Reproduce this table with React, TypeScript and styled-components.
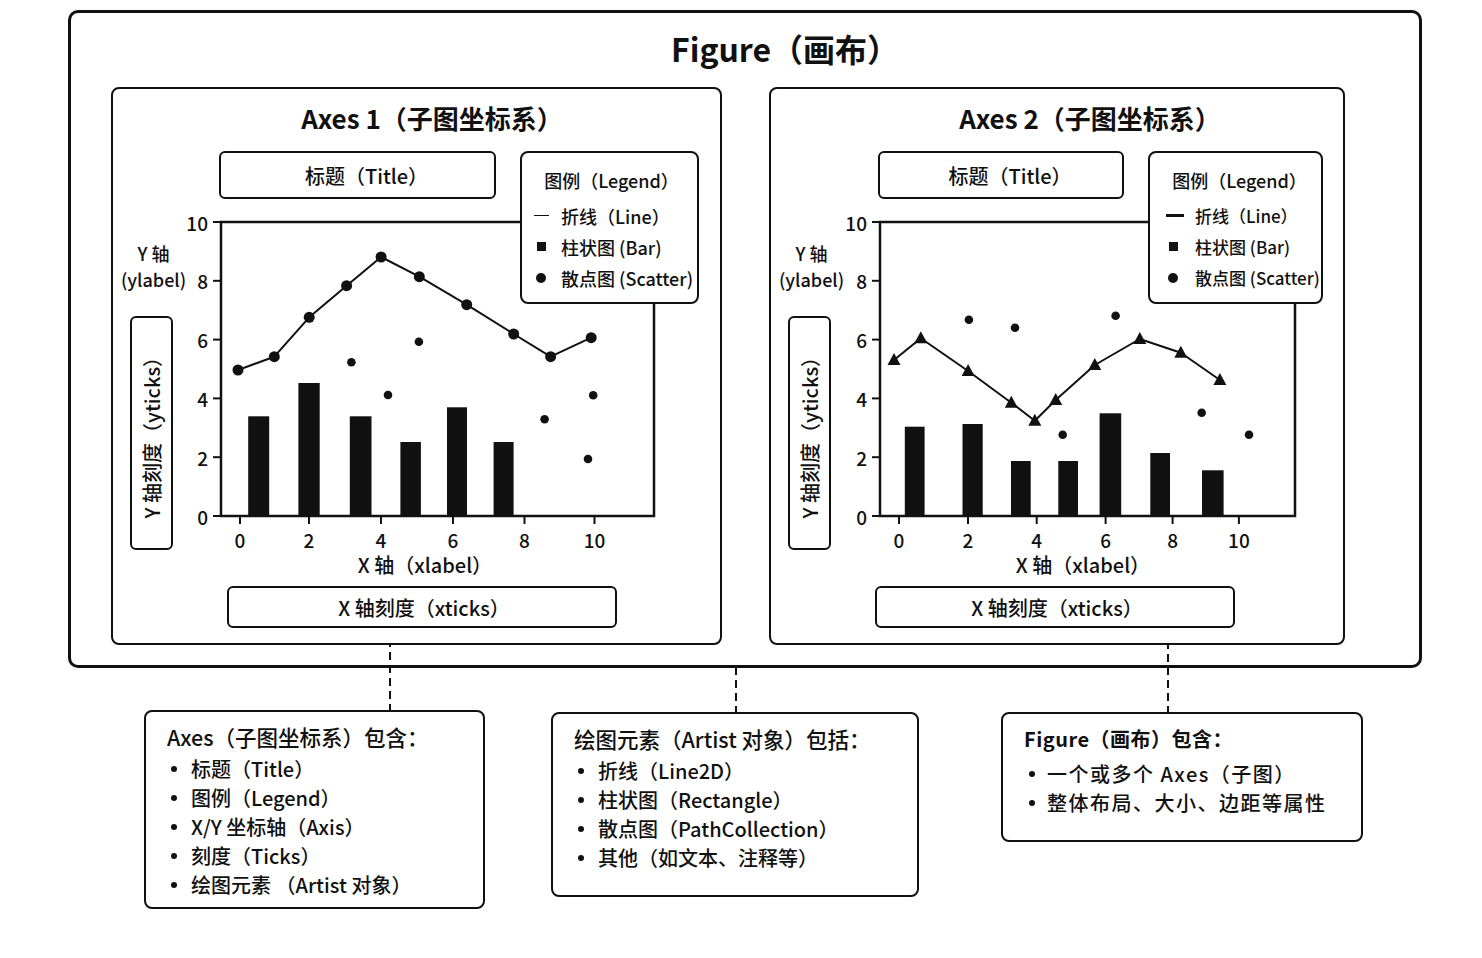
import React from 'react';
import styled, { createGlobalStyle } from 'styled-components';

const INK = '#111';
const FONT = `"Noto Sans CJK SC", "Noto Sans", sans-serif`;

const GlobalStyle = createGlobalStyle`
  html, body {
    margin: 0;
    background: #fff;
    color: ${INK};
    font-family: ${FONT};
    font-weight: 500;
  }
`;

type Pt = [number, number];

type ChartSpec = {
  left: number;
  right: number;
  top: number;
  bottom: number;
  xTicks: number[];
  line: Pt[];
  marker: 'circle' | 'triangle';
  scatter: Pt[];
  bars: { x: number; w: number; top: number }[];
};

type AxesSpec = {
  name: string;
  width: number;
  titleBox: { left: number; width: number };
  xTicksBox: { left: number; width: number };
  legend: { left: number; width: number; inset: number; cell: number; size: number; thickLine: boolean };
  chart: ChartSpec;
};

const axesList: AxesSpec[] = [
  {
    name: 'Axes 1（子图坐标系）',
    width: 611,
    titleBox: { left: 29, width: 277 },
    xTicksBox: { left: 37, width: 390 },
    legend: { left: 407, width: 179, inset: 12, cell: 27, size: 18, thickLine: false },
    chart: {
      left: 31,
      right: 464,
      top: 10,
      bottom: 304,
      xTicks: [50, 119, 191, 263, 334.5, 404.5],
      marker: 'circle',
      line: [
        [48, 158], [84.3, 144.7], [119.2, 105.3], [156.6, 73.7], [191.1, 45],
        [229.3, 64.7], [276.7, 92.7], [323.7, 122], [360.6, 144.7], [401.2, 125.7],
      ],
      scatter: [
        [161.4, 150.3], [228.9, 129.7], [198, 183], [354.6, 207.3], [403.2, 183.3], [398, 247],
      ],
      bars: [
        { x: 58.2, w: 21, top: 204.3 },
        { x: 108.4, w: 21.3, top: 171 },
        { x: 159.8, w: 21.7, top: 204.3 },
        { x: 210.4, w: 20.5, top: 230 },
        { x: 257, w: 20, top: 195.3 },
        { x: 303.6, w: 20, top: 230 },
      ],
    },
  },
  {
    name: 'Axes 2（子图坐标系）',
    width: 576,
    titleBox: { left: 30, width: 246 },
    xTicksBox: { left: 27, width: 360 },
    legend: { left: 377, width: 175, inset: 16, cell: 29, size: 17, thickLine: true },
    chart: {
      left: 32,
      right: 447,
      top: 10,
      bottom: 304,
      xTicks: [51, 120, 188.7, 257.6, 324.6, 390.9],
      marker: 'triangle',
      line: [
        [46, 148], [72.8, 126.3], [120.1, 159], [163.3, 190.7], [186.8, 208.7],
        [207.7, 188], [246.8, 153], [291.8, 127], [332.8, 140.7], [371.9, 168],
      ],
      scatter: [
        [120.9, 107.7], [167, 115.7], [267.6, 103.7], [214.7, 222.7], [353.7, 200.7], [401, 222.7],
      ],
      bars: [
        { x: 56.8, w: 19.8, top: 214.7 },
        { x: 114.5, w: 20.2, top: 212 },
        { x: 163, w: 19.7, top: 249 },
        { x: 210.3, w: 19.7, top: 249 },
        { x: 251.6, w: 21.6, top: 201.3 },
        { x: 302.3, w: 19.7, top: 241 },
        { x: 354, w: 21.6, top: 258.3 },
      ],
    },
  },
];

const callouts = [
  {
    title: 'Axes（子图坐标系）包含：',
    items: ['标题（Title）', '图例（Legend）', 'X/Y 坐标轴（Axis）', '刻度（Ticks）', '绘图元素 （Artist 对象）'],
    left: 76, top: 42, width: 341, height: 199, wire: { x: 243, height: 67 }, large: false,
  },
  {
    title: '绘图元素（Artist 对象）包括：',
    items: ['折线（Line2D）', '柱状图（Rectangle）', '散点图（PathCollection）', '其他（如文本、注释等）'],
    left: 66, top: 44, width: 368, height: 185, wire: { x: 182, height: 46 }, large: false,
  },
  {
    title: 'Figure（画布）包含：',
    items: ['一个或多个 Axes（子图）', '整体布局、大小、边距等属性'],
    left: 82, top: 44, width: 362, height: 130, wire: { x: 164, height: 69 }, large: true,
  },
];

/* ---------- page + figure ---------- */

const Page = styled.div`
  width: 1482px;
  height: 958px;
  box-sizing: border-box;
  padding: 10px 0 0 68px;
  overflow: hidden;
`;

const FigureFrame = styled.section`
  width: 1354px;
  height: 658px;
  box-sizing: border-box;
  border: 3px solid ${INK};
  border-radius: 10px;
  padding: 16px 0 0 40px;
  display: flex;
  flex-direction: column;
`;

const FigureTitle = styled.h1`
  margin: 0;
  padding-left: 40px;
  text-align: center;
  font-size: 32px;
  line-height: 38px;
  font-weight: 700;
`;

const AxesRow = styled.div`
  margin-top: 20px;
  display: flex;
  gap: 47px;
  align-items: flex-start;
`;

/* ---------- axes panel ---------- */

const AxesPanel = styled.div<{ $width: number }>`
  position: relative;
  width: ${({ $width }) => $width}px;
  height: 558px;
  box-sizing: border-box;
  border: 2px solid ${INK};
  border-radius: 8px;
  padding-top: 14px;
`;

const AxesHeading = styled.h2`
  margin: 0 0 0 84px;
  width: 470px;
  text-align: center;
  font-size: 26px;
  line-height: 30px;
  font-weight: 600;
`;

const AxesBody = styled.div`
  display: flex;
`;

const LeftColumn = styled.div`
  width: 77px;
  display: flex;
  flex-direction: column;
  align-items: center;
`;

const YLabel = styled.div`
  margin-top: 107px;
  padding-left: 4px;
  font-size: 18px;
  line-height: 26px;
  text-align: center;
  white-space: nowrap;
`;

const RoundBox = styled.div`
  box-sizing: border-box;
  border: 2px solid ${INK};
  border-radius: 6px;
  display: flex;
  align-items: center;
  justify-content: center;
  background: #fff;
  white-space: nowrap;
`;

const YTicksBox = styled(RoundBox)`
  margin-top: 24px;
  width: 43px;
  height: 234px;
`;

const SidewaysText = styled.span`
  writing-mode: vertical-rl;
  text-orientation: sideways;
  transform: rotate(180deg);
  font-size: 20px;
  line-height: 24px;
`;

const MainColumn = styled.div`
  width: 470px;
  display: flex;
  flex-direction: column;
`;

const TitleBox = styled(RoundBox)<{ $left: number; $width: number }>`
  margin: 18px 0 0 ${({ $left }) => $left}px;
  padding-left: 18px;
  width: ${({ $width }) => $width}px;
  height: 48px;
  font-size: 20px;
`;

const PlotSvg = styled.svg`
  display: block;
  margin-top: 13px;
  overflow: visible;
  font-family: ${FONT};
`;

const XLabel = styled.div`
  text-align: center;
  font-size: 20px;
  line-height: 26px;
`;

const XTicksBox = styled(RoundBox)<{ $left: number; $width: number }>`
  margin: 8px 0 0 ${({ $left }) => $left}px;
  padding-left: 4px;
  width: ${({ $width }) => $width}px;
  height: 42px;
  font-size: 20px;
`;

/* ---------- legend ---------- */

const LegendBox = styled.div<{ $left: number; $width: number; $inset: number; $size: number }>`
  position: absolute;
  left: ${({ $left }) => $left}px;
  top: 62px;
  width: ${({ $width }) => $width}px;
  height: 153px;
  box-sizing: border-box;
  border: 2px solid ${INK};
  border-radius: 8px;
  background: #fff;
  padding: 14px 0 0 ${({ $inset }) => $inset}px;
  font-size: ${({ $size }) => $size}px;
`;

const LegendTitle = styled.div`
  margin-bottom: 7px;
  font-size: 18px;
  line-height: 26px;
  text-align: center;
  padding-right: 8px;
  white-space: nowrap;
`;

const LegendItem = styled.div`
  display: flex;
  align-items: center;
  height: 31px;
  white-space: nowrap;
`;

const LegendCell = styled.span<{ $w: number }>`
  flex: none;
  width: ${({ $w }) => $w}px;
  display: flex;
  align-items: center;
`;

const LineSwatch = styled.span<{ $thick: boolean }>`
  width: ${({ $thick }) => ($thick ? 18 : 15)}px;
  height: ${({ $thick }) => ($thick ? 3 : 1.5)}px;
  background: ${INK};
`;

const SquareSwatch = styled.span`
  margin-left: 3px;
  width: 9px;
  height: 9px;
  background: ${INK};
`;

const DotSwatch = styled.span`
  margin-left: 2px;
  width: 10px;
  height: 10px;
  border-radius: 50%;
  background: ${INK};
`;

/* ---------- callouts ---------- */

const CalloutRow = styled.div`
  display: flex;
  align-items: flex-start;
`;

const Callout = styled.div<{ $left: number; $top: number; $width: number; $height: number }>`
  position: relative;
  margin: ${({ $top }) => $top}px 0 0 ${({ $left }) => $left}px;
  width: ${({ $width }) => $width}px;
  height: ${({ $height }) => $height}px;
  box-sizing: border-box;
  border: 2px solid ${INK};
  border-radius: 8px;
  padding: 11px 0 0 21px;
`;

const Wire = styled.span<{ $x: number; $h: number }>`
  position: absolute;
  left: ${({ $x }) => $x}px;
  bottom: 100%;
  width: 2px;
  height: ${({ $h }) => $h}px;
  background: repeating-linear-gradient(to top, ${INK} 0 8px, transparent 8px 13px);
`;

const CalloutTitle = styled.div<{ $large: boolean }>`
  font-size: ${({ $large }) => ($large ? 20 : 21.5)}px;
  line-height: 28px;
  font-weight: ${({ $large }) => ($large ? 600 : 500)};
  letter-spacing: ${({ $large }) => ($large ? 0.5 : 0)}px;
  white-space: nowrap;
`;

const BulletList = styled.ul<{ $large: boolean }>`
  margin: ${({ $large }) => ($large ? 6 : 3)}px 0 0;
  padding: 0;
  list-style: none;
`;

const BulletItem = styled.li<{ $large: boolean }>`
  display: flex;
  align-items: center;
  height: 29px;
  font-size: 20px;
  letter-spacing: ${({ $large }) => ($large ? 1.5 : 0)}px;
  white-space: nowrap;

  &::before {
    content: '';
    width: 6px;
    height: 6px;
    border-radius: 50%;
    background: ${INK};
    margin: 0 ${({ $large }) => ($large ? 12 : 14)}px 0 ${({ $large }) => ($large ? 5 : 4)}px;
    flex: none;
  }
`;

/* ---------- chart ---------- */

const Chart = ({ spec }: { spec: ChartSpec }) => {
  const { left, right, top, bottom } = spec;
  const yTicks = [0, 2, 4, 6, 8, 10].map((v) => ({ v, y: bottom - (v / 10) * (bottom - top) }));
  const linePts = spec.line.map(([x, y]) => `${x},${y}`).join(' ');

  return (
    <PlotSvg width={470} height={340} viewBox="0 0 470 340">
      <rect x={left} y={top} width={right - left} height={bottom - top} fill="none" stroke={INK} strokeWidth={2.5} />
      {yTicks.map(({ v, y }) => (
        <g key={v}>
          <line x1={left - 8} x2={left} y1={y} y2={y} stroke={INK} strokeWidth={2} />
          <text x={left - 13} y={y} textAnchor="end" dominantBaseline="central" fontSize={19} fill={INK}>
            {v}
          </text>
        </g>
      ))}
      {spec.xTicks.map((x, i) => (
        <g key={i}>
          <line x1={x} x2={x} y1={bottom} y2={bottom + 8} stroke={INK} strokeWidth={2} />
          <text x={x} y={bottom + 23} textAnchor="middle" dominantBaseline="central" fontSize={19} fill={INK}>
            {i * 2}
          </text>
        </g>
      ))}
      {spec.bars.map((b, i) => (
        <rect key={i} x={b.x} y={b.top} width={b.w} height={bottom - b.top} fill={INK} />
      ))}
      <polyline points={linePts} fill="none" stroke={INK} strokeWidth={2} strokeLinejoin="round" />
      {spec.line.map(([x, y], i) =>
        spec.marker === 'circle' ? (
          <circle key={i} cx={x} cy={y} r={5.5} fill={INK} />
        ) : (
          <path key={i} d={`M${x} ${y - 7}L${x + 6.5} ${y + 5}L${x - 6.5} ${y + 5}Z`} fill={INK} />
        ),
      )}
      {spec.scatter.map(([x, y], i) => (
        <circle key={i} cx={x} cy={y} r={4.3} fill={INK} />
      ))}
    </PlotSvg>
  );
};

const Axes = ({ spec }: { spec: AxesSpec }) => (
  <AxesPanel $width={spec.width}>
    <AxesHeading>{spec.name}</AxesHeading>
    <AxesBody>
      <LeftColumn>
        <YLabel>
          Y 轴
          <br />
          (ylabel)
        </YLabel>
        <YTicksBox>
          <SidewaysText>Y 轴刻度（yticks）</SidewaysText>
        </YTicksBox>
      </LeftColumn>
      <MainColumn>
        <TitleBox $left={spec.titleBox.left} $width={spec.titleBox.width}>
          标题（Title）
        </TitleBox>
        <Chart spec={spec.chart} />
        <XLabel>X 轴（xlabel）</XLabel>
        <XTicksBox $left={spec.xTicksBox.left} $width={spec.xTicksBox.width}>
          X 轴刻度（xticks）
        </XTicksBox>
      </MainColumn>
    </AxesBody>
    <LegendBox
      $left={spec.legend.left}
      $width={spec.legend.width}
      $inset={spec.legend.inset}
      $size={spec.legend.size}
    >
      <LegendTitle>图例（Legend）</LegendTitle>
      <LegendItem>
        <LegendCell $w={spec.legend.cell}>
          <LineSwatch $thick={spec.legend.thickLine} />
        </LegendCell>
        折线（Line）
      </LegendItem>
      <LegendItem>
        <LegendCell $w={spec.legend.cell}>
          <SquareSwatch />
        </LegendCell>
        柱状图 (Bar)
      </LegendItem>
      <LegendItem>
        <LegendCell $w={spec.legend.cell}>
          <DotSwatch />
        </LegendCell>
        散点图 (Scatter)
      </LegendItem>
    </LegendBox>
  </AxesPanel>
);

export default function App() {
  return (
    <>
      <GlobalStyle />
      <Page>
        <FigureFrame>
          <FigureTitle>Figure（画布）</FigureTitle>
          <AxesRow>
            {axesList.map((a) => (
              <Axes key={a.name} spec={a} />
            ))}
          </AxesRow>
        </FigureFrame>
        <CalloutRow>
          {callouts.map((c) => (
            <Callout key={c.title} $left={c.left} $top={c.top} $width={c.width} $height={c.height}>
              <Wire $x={c.wire.x} $h={c.wire.height} />
              <CalloutTitle $large={c.large}>{c.title}</CalloutTitle>
              <BulletList $large={c.large}>
                {c.items.map((it) => (
                  <BulletItem key={it} $large={c.large}>
                    {it}
                  </BulletItem>
                ))}
              </BulletList>
            </Callout>
          ))}
        </CalloutRow>
      </Page>
    </>
  );
}
